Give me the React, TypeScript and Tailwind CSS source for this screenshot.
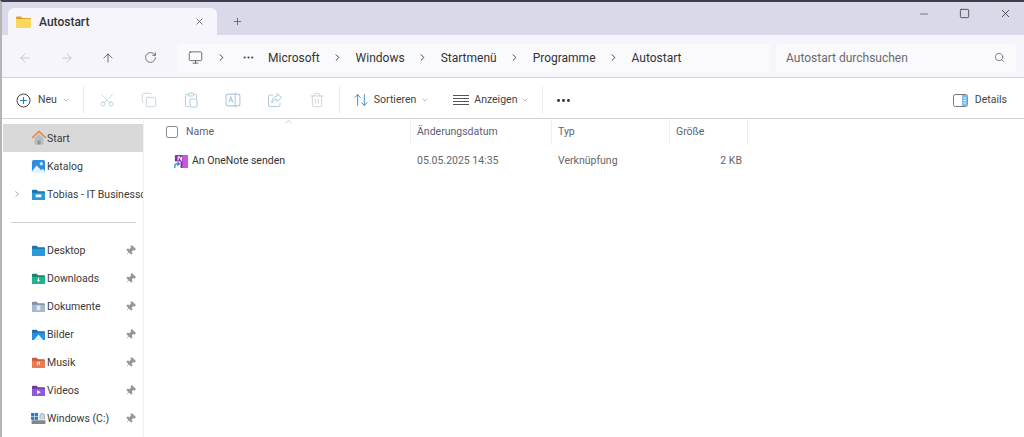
import React from "react";
import { ArrowLeft, ArrowRight, ArrowUp, RotateCw, Monitor, ChevronRight, ChevronDown, ChevronUp, MoreHorizontal, Search, X, Plus, Minus, Square, Scissors, Copy, Trash2, ArrowUpDown, Pin } from "lucide-react";

const Folder = ({ c, d, children }: { c: string; d: string; children?: React.ReactNode }) => (
  <svg width="15" height="13" viewBox="0 0 16 14" className="shrink-0">
    <path d="M1 3a1 1 0 0 1 1-1h4l1.500 1.500H14a1 1 0 0 1 1 1V12a1 1 0 0 1-1 1H2a1 1 0 0 1-1-1z" fill={d} />
    <path d="M1 5h14v7a1 1 0 0 1-1 1H2a1 1 0 0 1-1-1z" fill={c} />
    {children}
  </svg>
);

const HomeIcon = () => (
  <svg width="16" height="16" viewBox="0 0 16 16" className="shrink-0">
    <path d="M3.500 8v6.500h9V8L8 4z" fill="#b7bcc0" />
    <path d="M6.500 14.500v-4h3v4z" fill="#8d9499" />
    <path d="M1 8l7-6.500L15 8" fill="none" stroke="#e8894a" strokeWidth="1.700" />
  </svg>
);

const GalleryIcon = () => (
  <svg width="15" height="15" viewBox="0 0 16 16" className="shrink-0">
    <rect x="1" y="1" width="14" height="14" rx="2" fill="#2a8fe0" />
    <circle cx="11" cy="5" r="1.800" fill="#cfe8fb" />
    <path d="M1 13l5-6 5 5 1.500-1.500L15 13v1a1 1 0 0 1-1 1H2a1 1 0 0 1-1-1z" fill="#e3f1fb" />
  </svg>
);

const DriveIcon = () => (
  <svg width="15" height="13" viewBox="0 0 16 14" className="shrink-0">
    <rect x="0" y="1" width="3.500" height="3.500" fill="#2b7bc4" />
    <rect x="4" y="1" width="3.500" height="3.500" fill="#2b7bc4" />
    <rect x="0" y="5" width="3.500" height="3.500" fill="#2b7bc4" />
    <rect x="4" y="5" width="3.500" height="3.500" fill="#2b7bc4" />
    <rect x="0.500" y="9" width="15" height="4" rx="1" fill="#7d8890" />
    <path d="M9.500 8V4a2.500 2.500 0 0 1 5 0v4" fill="#cfd6da" stroke="#9fb0ba" />
  </svg>
);

const OneNote = () => (
  <svg width="15" height="15" viewBox="0 0 16 16" className="shrink-0">
    <rect x="2" y="1" width="14" height="14" rx="1" fill="#8a2fb0" />
    <rect x="10" y="1" width="6" height="14" fill="#c25bd6" />
    <path d="M5.500 7V3h1L9 6.500V3" fill="none" stroke="#fff" strokeWidth="1.100" />
    <rect x="0" y="8" width="8" height="8" fill="#fff" />
    <path d="M2 15V12a1.500 1.500 0 0 1 1.500-1.500H6.500M4.800 8.800L6.800 10.500 4.800 12.200" fill="none" stroke="#2a7fd0" strokeWidth="1.300" />
  </svg>
);

const PinIcon = () => <Pin size={11} className="ml-auto mr-[3px] shrink-0 rotate-45 text-[#8f959a] fill-[#8f959a]" strokeWidth={1.500} />;

const NavRow = ({ icon, label, pin, selected, chevron }: { icon: React.ReactNode; label: string; pin?: boolean; selected?: boolean; chevron?: boolean }) => (
  <div className={`flex h-[28px] items-center overflow-hidden whitespace-nowrap pr-1 ${selected ? "bg-[#d9d9d9]" : ""}`}>
    <div className="flex w-[27px] shrink-0 justify-start pl-[9px]">
      {chevron && <ChevronRight size={10} className="text-[#777]" strokeWidth={1.500} />}
    </div>
    <div className="flex w-[17px] shrink-0 justify-center">{icon}</div>
    <span className="pt-px text-[10.5px] text-[#3a3a3a]">{label}</span>
    {pin && <PinIcon />}
  </div>
);

const Crumb = ({ label }: { label: string }) => <span className="text-[12px] text-[#333]">{label}</span>;

const Sep = () => <ChevronRight size={11} className="shrink-0 text-[#333]" strokeWidth={2} />;

const ToolSep = () => <div className="h-[28px] w-px bg-[#ececec]" />;

const Head = ({ label, className }: { label: string; className: string }) => (
  <div className={`flex h-[25px] items-center border-r border-[#efefef] pl-[6px] text-[10.5px] text-[#5b5f78] ${className}`}>{label}</div>
);

export default function App() {
  return (
    <div className="flex h-[437px] w-[1024px] flex-col overflow-hidden border-l-2 border-t-2 border-l-[#b5b5b5] border-t-[#3c3f4a] bg-white font-['Roboto',sans-serif]">
      {/* title bar */}
      <div className="flex h-[33px] shrink-0 items-end bg-[#d9d9ea]">
        <div className="ml-[6px] flex h-[27px] w-[209px] items-center rounded-t-[6px] bg-[#f5f5fb] pl-[8px] pr-[12px]">
          <svg width="15" height="12" viewBox="0 0 15 12">
            <path d="M0 1.500a1 1 0 0 1 1-1h4l1.500 1.500H14a1 1 0 0 1 1 1V4H0z" fill="#d9a62e" />
            <path d="M0 3h15v8a1 1 0 0 1-1 1H1a1 1 0 0 1-1-1z" fill="#fbd75b" />
          </svg>
          <span className="ml-[8px] text-[12px] font-medium text-[#333]">Autostart</span>
          <X size={11} className="ml-auto text-[#444]" strokeWidth={1.500} />
        </div>
        <div className="mb-[8px] ml-[15px] flex">
          <Plus size={11} className="text-[#444]" strokeWidth={1.500} />
        </div>
        <div className="mb-[15px] ml-auto flex items-center gap-[29px] pr-[12px]">
          <Minus size={12} className="text-[#444]" strokeWidth={1.300} />
          <Square size={11} className="text-[#333]" strokeWidth={1.700} />
          <X size={13} className="text-[#333]" strokeWidth={1.500} />
        </div>
      </div>
      {/* address band */}
      <div className="flex h-[43px] shrink-0 items-center border-b border-[#d3d3d6] bg-[#f5f5fb] pr-[8px] pt-[3px]">
        <div className="flex w-[175px] shrink-0 items-center pl-[16px]">
          <ArrowLeft size={14} className="text-[#b8b8be]" strokeWidth={1.300} />
          <ArrowRight size={14} className="ml-[28px] text-[#b8b8be]" strokeWidth={1.300} />
          <ArrowUp size={14} className="ml-[27px] text-[#444]" strokeWidth={1.300} />
          <RotateCw size={13} className="ml-[29px] text-[#444]" strokeWidth={1.300} />
        </div>
        <div className="flex h-[28px] w-[593px] shrink-0 items-center rounded-[4px] bg-[#fafafd] pl-[11px]">
          <Monitor size={15} className="text-[#444]" strokeWidth={1.200} />
          <div className="ml-[13px]"><Sep /></div>
          <MoreHorizontal size={13} className="ml-[15px] text-[#444]" />
          <div className="ml-[13px] flex items-center">
            <Crumb label="Microsoft" />
            <div className="mx-[12.500px]"><Sep /></div>
            <Crumb label="Windows" />
            <div className="mx-[12.500px]"><Sep /></div>
            <Crumb label="Startmenü" />
            <div className="mx-[12.500px]"><Sep /></div>
            <Crumb label="Programme" />
            <div className="mx-[12.500px]"><Sep /></div>
            <Crumb label="Autostart" />
          </div>
        </div>
        <div className="ml-[6px] flex h-[28px] flex-1 items-center rounded-[4px] bg-[#fafafd] pl-[10px] pr-[11px]">
          <span className="text-[12px] text-[#6a6a6a]">Autostart durchsuchen</span>
          <Search size={11} className="ml-auto text-[#555]" strokeWidth={1.500} />
        </div>
      </div>
      {/* toolbar */}
      <div className="flex h-[41px] shrink-0 items-center border-b border-[#d3d3d6] bg-white pl-[14px] pr-[17px] pt-[4px]">
        <svg width="15" height="15" viewBox="0 0 15 15" className="shrink-0">
          <circle cx="7.500" cy="7.500" r="6.500" fill="none" stroke="#444" strokeWidth="1" />
          <path d="M7.500 4v7M4 7.500h7" stroke="#2a7fc0" strokeWidth="1.100" />
        </svg>
        <span className="ml-[7px] text-[10.5px] text-[#444]">Neu</span>
        <ChevronDown size={8} className="ml-[5px] text-[#999]" />
        <div className="ml-[13px]"><ToolSep /></div>
        <div className="ml-[15px] flex items-center gap-[26px] text-[#aecbd9]">
          <Scissors size={16} strokeWidth={1.100} className="-rotate-90" />
          <Copy size={16} strokeWidth={1.100} />
          <svg width="16" height="16" viewBox="0 0 16 16" fill="none" stroke="currentColor" strokeWidth="1" className="shrink-0">
            <path d="M5 2.500H3.500a1 1 0 0 0-1 1v10a1 1 0 0 0 1 1H6M11 2.500h1.500a1 1 0 0 1 1 1V6" />
            <rect x="5.500" y="1" width="5" height="3" rx="1" />
            <rect x="7" y="7" width="7" height="8" rx="1" />
          </svg>
          <svg width="16" height="16" viewBox="0 0 15 15" fill="none" stroke="currentColor" strokeWidth="1" className="shrink-0">
            <rect x="1" y="2" width="13" height="11" rx="2" />
            <path d="M9.500 0.500v14M3.500 10l2-5.500 2 5.500M4.200 8h2.600" />
          </svg>
          <svg width="16" height="16" viewBox="0 0 16 16" fill="none" stroke="currentColor" strokeWidth="1" className="shrink-0">
            <path d="M6 3H3a1.500 1.500 0 0 0-1.500 1.500V13A1.500 1.500 0 0 0 3 14.500h8.500A1.500 1.500 0 0 0 13 13v-2" />
            <path d="M10 1.500L14.500 5.500 10 9.500V7.200C7 7.200 5.500 8.500 5 11c-.5-4 1.500-6.500 5-6.700z" />
          </svg>
          <Trash2 size={16} strokeWidth={1.100} className="text-[#c0c5c8]" />
        </div>
        <div className="ml-[14px]"><ToolSep /></div>
        <ArrowUpDown size={16} className="ml-[13px] text-[#2a7fc0]" strokeWidth={1.300} />
        <span className="ml-[5px] text-[10.5px] text-[#444]">Sortieren</span>
        <ChevronDown size={8} className="ml-[5px] text-[#999]" />
        <svg width="16" height="12" viewBox="0 0 16 12" stroke="#555" strokeWidth="1" className="ml-[24px] shrink-0">
          <path d="M0 1.500h16M0 4.500h16M0 7.500h16M0 10.500h16" />
        </svg>
        <span className="ml-[5px] text-[10.5px] text-[#444]">Anzeigen</span>
        <ChevronDown size={8} className="ml-[4px] text-[#999]" />
        <div className="ml-[13px]"><ToolSep /></div>
        <MoreHorizontal size={17} className="ml-[12px] text-[#333]" strokeWidth={2.200} />
        <svg width="15" height="13" viewBox="0 0 15 13" className="ml-auto shrink-0">
          <rect x="0.500" y="0.500" width="14" height="12" rx="2" fill="none" stroke="#777" />
          <path d="M9 1h4a1.500 1.500 0 0 1 1.500 1.500v8a1.500 1.500 0 0 1-1.500 1.500H9z" fill="#7dbdec" />
          <path d="M10.500 4h2.500M10.500 6.500h2.500M10.500 9h2.500" stroke="#fff" strokeWidth=".8" />
        </svg>
        <span className="ml-[7px] text-[10.5px] text-[#444]">Details</span>
      </div>
      {/* body */}
      <div className="flex min-h-0 flex-1">
        <aside className="w-[142px] shrink-0 border-r border-[#f1f1f3] pl-px pt-[5px]">
          <NavRow icon={<HomeIcon />} label="Start" selected />
          <NavRow icon={<GalleryIcon />} label="Katalog" />
          <NavRow icon={<Folder c="#2a9bd8" d="#1670ad"><rect x="5" y="7" width="6" height="3" fill="#fff" /></Folder>} label="Tobias - IT Businesscoach" chevron />
          <div className="flex h-[28px] items-center pl-[8px] pr-[7px]"><div className="h-px flex-1 bg-[#cfcfcf]" /></div>
          <NavRow icon={<Folder c="#2a9bd8" d="#1670ad" />} label="Desktop" pin />
          <NavRow icon={<Folder c="#27b08d" d="#12806a"><path d="M8 6v4M6.500 8.500L8 10l1.500-1.500" stroke="#fff" fill="none" /></Folder>} label="Downloads" pin />
          <NavRow icon={<Folder c="#a9b9cc" d="#7f92a8"><rect x="6" y="6" width="4" height="5" fill="#e4eaf1" /></Folder>} label="Dokumente" pin />
          <NavRow icon={<Folder c="#2a8fe0" d="#1670ad"><path d="M3 13l5-6 5 6z" fill="#e3f1fb" /></Folder>} label="Bilder" pin />
          <NavRow icon={<Folder c="#ea7b53" d="#c9583a"><path d="M7 10V7l2-.5v3" stroke="#fff" fill="none" /></Folder>} label="Musik" pin />
          <NavRow icon={<Folder c="#9158d8" d="#6b38a8"><path d="M6.500 6.500v4.500l4-2.250z" fill="#fff" /></Folder>} label="Videos" pin />
          <NavRow icon={<DriveIcon />} label="Windows (C:)" pin />
        </aside>
        <main className="relative min-w-0 flex-1">
          <ChevronUp size={11} className="absolute left-[139px] top-[-3px] text-[#aaa]" strokeWidth={1.200} />
          <div className="flex">
            <div className="flex h-[25px] w-[267px] items-center border-r border-[#efefef] pl-[22px]">
              <div className="h-[12px] w-[12px] rounded-[2px] border border-[#8e8e8e]" />
              <span className="ml-[8px] text-[10.5px] text-[#5b5f78]">Name</span>
            </div>
            <Head label="Änderungsdatum" className="w-[141px]" />
            <Head label="Typ" className="w-[118px]" />
            <Head label="Größe" className="w-[78px]" />
          </div>
          <div className="mt-[3px] flex h-[28px] items-center text-[10.5px]">
            <div className="flex w-[267px] items-center pl-[29px] text-[#333]">
              <OneNote />
              <span className="ml-[4px]">An OneNote senden</span>
            </div>
            <div className="w-[141px] pl-[6px] text-[#666]">05.05.2025 14:35</div>
            <div className="w-[118px] pl-[6px] text-[#666]">Verknüpfung</div>
            <div className="w-[72px] text-right text-[#666]">2 KB</div>
          </div>
        </main>
      </div>
    </div>
  );
}
